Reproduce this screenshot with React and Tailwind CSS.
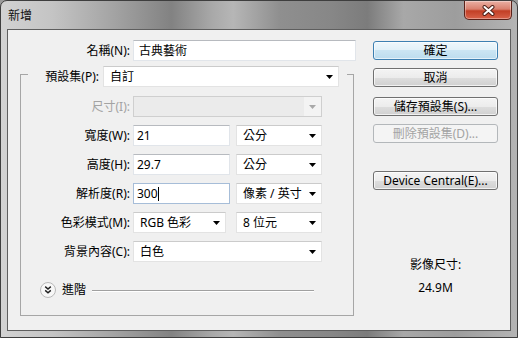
import React from "react";

// ---------- small pieces ----------
const Arrow = ({ disabled }) => (
  <svg width="7" height="4" viewBox="0 0 7 4" className="shrink-0">
    <path d="M0 0h7L3.5 4z" fill={disabled ? "#a8a8a8" : "#000"} />
  </svg>
);

const Select = ({ value, className = "" }) => (
  <div
    className={`flex items-center justify-between h-[21px] bg-white border border-[#e3e3e3] border-t-[#cbcbcb] pl-[6px] pr-[5px] ${className}`}
  >
    <span className="whitespace-nowrap">{value}</span>
    <Arrow />
  </div>
);

const DisabledSelect = ({ className = "" }) => (
  <div className={`flex h-[21px] bg-[#ebebeb] border border-[#cfcfcf] ${className}`}>
    <div className="flex-1" />
    <div className="w-[17px] bg-[#f3f3f3] flex items-center justify-center">
      <Arrow disabled />
    </div>
  </div>
);

const Field = ({ value, focused, className = "" }) => (
  <div
    className={`flex items-center h-[21px] bg-white border pl-[3px] ${
      focused ? "border-[#a6bdd8]" : "border-[#e1e5ea] border-t-[#b7babf]"
    } ${className}`}
  >
    <span>{value}</span>
    {focused && <span className="w-px h-[14px] bg-black" />}
  </div>
);

const Row = ({ label, disabled, children }) => (
  <div className="flex items-center h-[21px]">
    <div className={`w-[109px] text-right whitespace-nowrap ${disabled ? "text-[#a3a3a3]" : "text-black"}`}>
      {label}
    </div>
    <div className="ml-[3px] flex items-center">{children}</div>
  </div>
);

const Btn = ({ children, kind = "normal" }) => {
  const look = {
    primary:
      "border-[#3c7fb1] bg-[linear-gradient(#eef7fc_0%,#e0f0f8_50%,#cbe5f3_50%,#bcdcee_100%)] shadow-[inset_0_0_0_1px_rgba(255,255,255,0.6)] text-black",
    normal:
      "border-[#707070] bg-[linear-gradient(#f4f4f4_0%,#ececec_50%,#dedede_50%,#d0d0d0_100%)] shadow-[inset_0_0_0_1px_rgba(255,255,255,0.7)] text-black",
    disabled: "border-[#b3b7ba] bg-[#f4f4f4] text-[#a3a3a3]",
  }[kind];
  return (
    <div className={`h-[19px] w-full flex items-center justify-center rounded-[3px] border whitespace-nowrap ${look}`}>
      {children}
    </div>
  );
};

export default function App() {
  return (
    <div className="w-[518px] h-[338px] bg-[#9a9a9a] font-['Noto_Sans','Noto_Sans_CJK_TC',sans-serif] text-[12px] leading-[16px]">
      <div className="w-[518px] h-[338px] rounded-t-[7px] border border-[#3e3e3e] bg-[linear-gradient(90deg,#d2d2d2_0%,#c4c4c4_10%,#a3a3a3_22%,#828282_33%,#a9a9a9_41%,#b6b6b6_45%,#8f8f8f_54%,#878787_64%,#7c7c7c_71%,#a8a8a8_78%,#9d9d9d_88%,#b4b4b4_100%)] flex flex-col">
        {/* ===== TITLE BAR ===== */}
        <div className="h-[28px] flex items-start justify-between pl-[7px] pr-[5px]">
          <div className="pt-[7px] text-[#111]">新增</div>
          <div className="w-[48px] h-[19px] rounded-b-[5px] border border-t-0 border-[#5b2219] bg-[linear-gradient(#eab0a4_0%,#d9806e_45%,#c23f25_55%,#d8624a_100%)] shadow-[inset_0_0_0_1px_rgba(255,255,255,0.35)] flex items-center justify-center">
            <svg width="13" height="11" viewBox="0 0 13 11">
              <path d="M2.5 2l8 7M10.5 2l-8 7" stroke="#4d2119" strokeWidth="4" strokeLinecap="round" />
              <path d="M2.5 2l8 7M10.5 2l-8 7" stroke="#fff" strokeWidth="2" strokeLinecap="round" />
            </svg>
          </div>
        </div>

        {/* ===== CLIENT AREA ===== */}
        <div className="mx-[6px] h-[302px] border border-[#5e5e5e] bg-[#f0f0f0] flex">
          {/* LEFT */}
          <div className="w-[348px] pt-[10px] flex flex-col">
            <div className="flex items-center h-[21px]">
              <div className="w-[122px] text-right">名稱(N):</div>
              <Field value="古典藝術" className="ml-[3px] w-[223px] pl-[5px]" />
            </div>

            <fieldset className="ml-[12px] w-[334px] border border-[#a6a6a6]">
              <legend className="ml-[7px] pt-[5px]">
                <div className="flex items-center">
                  <div className="w-[71px] text-right">預設集(P):</div>
                  <Select value="自訂" className="ml-[4px] w-[236px]" />
                  <div className="w-[8px]" />
                </div>
              </legend>

              <div className="pt-[9px] pb-[17px] flex flex-col gap-[8px]">
                <Row label="尺寸(I):" disabled>
                  <DisabledSelect className="w-[189px]" />
                </Row>
                <Row label="寬度(W):">
                  <Field value="21" className="w-[97px]" />
                  <Select value="公分" className="ml-[6px] w-[86px]" />
                </Row>
                <Row label="高度(H):">
                  <Field value="29.7" className="w-[97px]" />
                  <Select value="公分" className="ml-[6px] w-[86px]" />
                </Row>
                <Row label="解析度(R):">
                  <Field value="300" focused className="w-[97px]" />
                  <Select value="像素 / 英寸" className="ml-[6px] w-[86px]" />
                </Row>
                <Row label="色彩模式(M):">
                  <Select value="RGB 色彩" className="w-[93px]" />
                  <Select value="8 位元" className="ml-[10px] w-[86px]" />
                </Row>
                <Row label="背景內容(C):">
                  <Select value="白色" className="w-[189px]" />
                </Row>

                <div className="mt-[12px] h-[16px] flex items-center pl-[19px]">
                  <svg width="16" height="16" viewBox="0 0 16 16" className="shrink-0">
                    <circle cx="8" cy="8" r="7.5" fill="#f7f7f7" stroke="#b9b9b9" />
                    <path d="M5.2 4.6l2.8 2.4 2.8-2.4M5.2 8.4l2.8 2.4 2.8-2.4" fill="none" stroke="#1e1e1e" strokeWidth="1.4" />
                  </svg>
                  <span className="ml-[6px]">進階</span>
                  <div className="ml-[6px] w-[222px] border-t border-[#a0a0a0] shadow-[0_1px_0_#fff]" />
                </div>
              </div>
            </fieldset>
          </div>

          {/* RIGHT */}
          <div className="ml-[17px] w-[125px] pt-[11px] flex flex-col items-center">
            <Btn kind="primary">確定</Btn>
            <div className="h-[8px]" />
            <Btn>取消</Btn>
            <div className="h-[10px]" />
            <Btn>儲存預設集(S)...</Btn>
            <div className="h-[8px]" />
            <Btn kind="disabled">刪除預設集(D)...</Btn>
            <div className="h-[28px]" />
            <Btn>Device Central(E)...</Btn>
            <div className="mt-[67px]">影像尺寸:</div>
            <div className="mt-[7px]">24.9M</div>
          </div>
        </div>
      </div>
    </div>
  );
}
